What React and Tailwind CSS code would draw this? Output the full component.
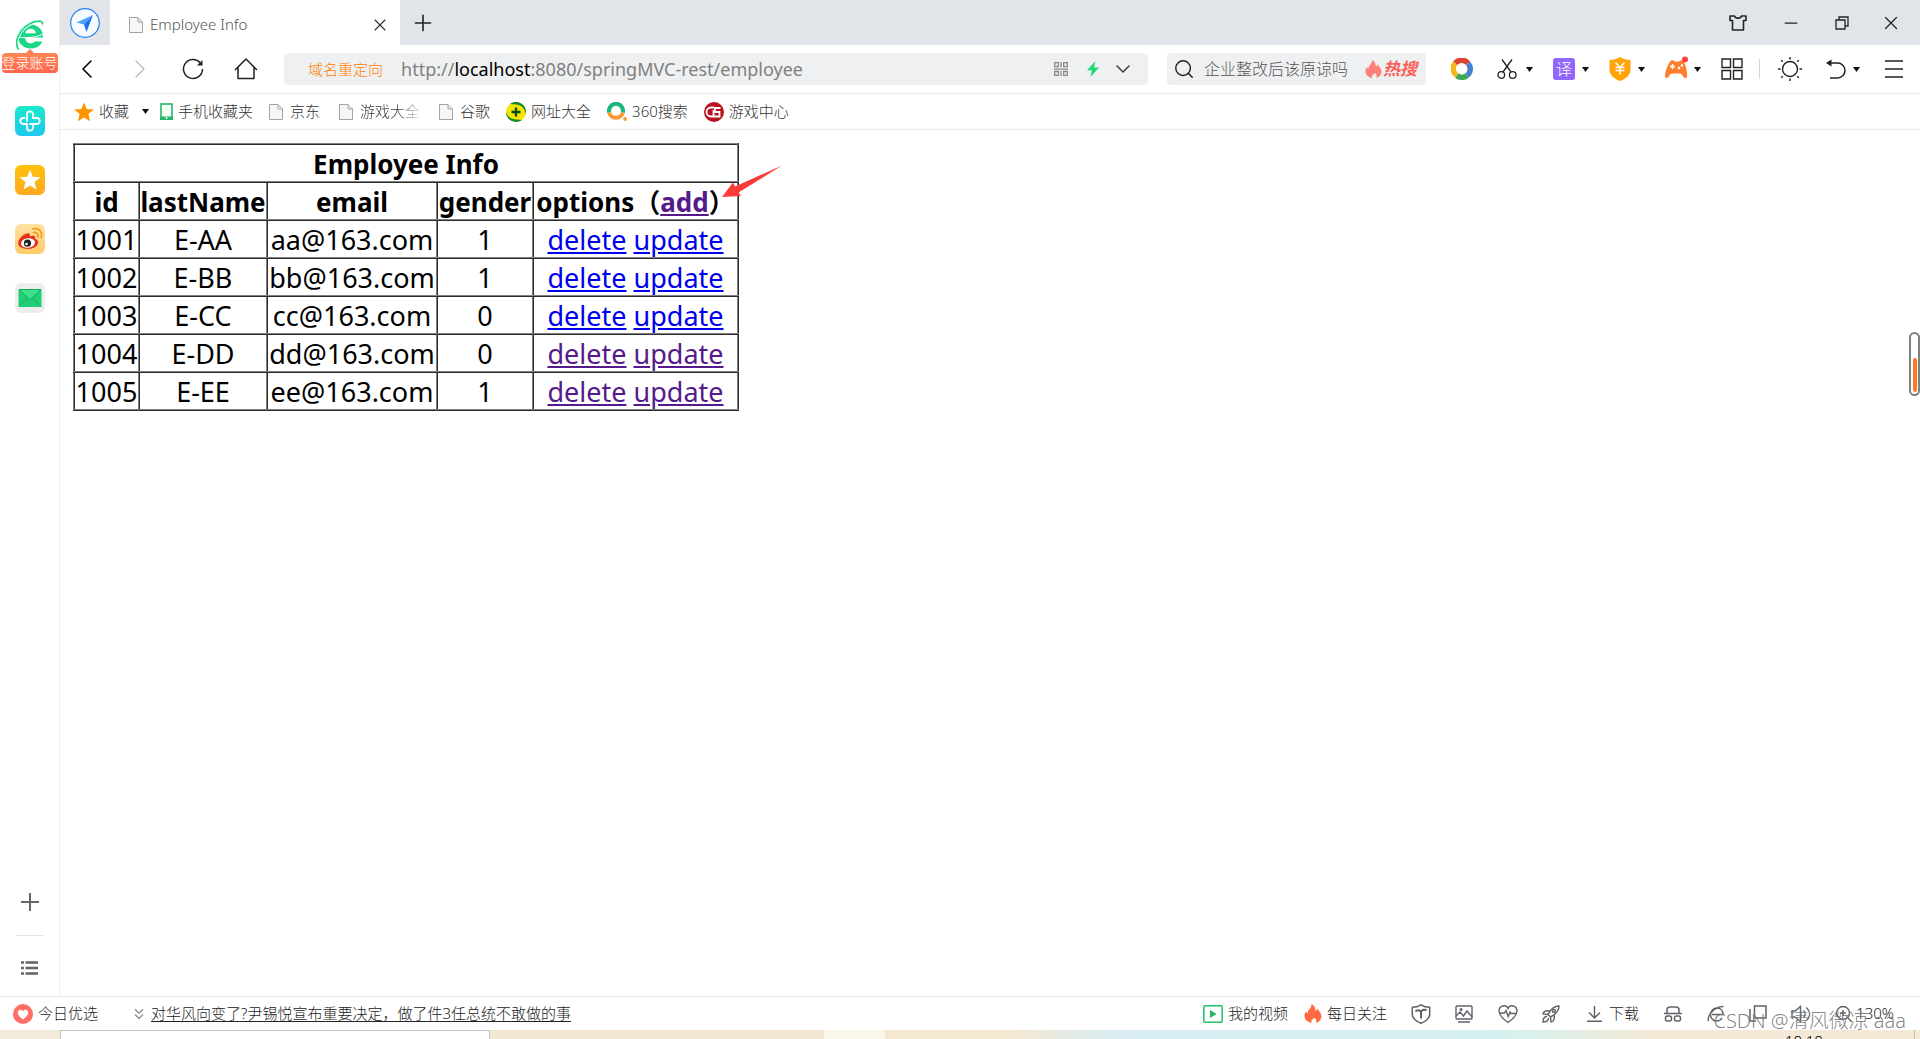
import { useState } from 'react';
import { X, Plus, Minus, ChevronLeft, ChevronRight, ChevronDown, ChevronsDown, Menu, Search } from 'lucide-react';

const employees = [
  { id: 1001, lastName: 'E-AA', email: 'aa@163.com', gender: 1, visited: false },
  { id: 1002, lastName: 'E-BB', email: 'bb@163.com', gender: 1, visited: false },
  { id: 1003, lastName: 'E-CC', email: 'cc@163.com', gender: 0, visited: false },
  { id: 1004, lastName: 'E-DD', email: 'dd@163.com', gender: 0, visited: true },
  { id: 1005, lastName: 'E-EE', email: 'ee@163.com', gender: 1, visited: true },
];

const pageUrl = 'http://localhost:8080/springMVC-rest/employee';

function Caret() {
  return (
    <svg className="w-[7px] h-[5px] shrink-0" viewBox="0 0 7 5">
      <path d="M0 0h7L3.500 5z" fill="#111" />
    </svg>
  );
}

function PageIcon({ className }) {
  return (
    <svg className={className} viewBox="0 0 14 16" fill="#f7f7f7" stroke="#a3a3a3">
      <path d="M.5.5h8.500l4.500 4.500v10.500H.5z" />
      <path d="M9 .5V5h4.500" fill="none" />
    </svg>
  );
}

function BrowserLogo() {
  return (
    <svg className="w-7 h-[30px]" viewBox="0 0 28 30" fill="none">
      <path d="M27 17.500c.4-7.500-5-13-12.500-13S2 10 2 16.500 7.500 28.500 14.500 28.500c5.500 0 9.800-2.500 11.800-7h-7.500c-1 1.300-2.300 1.900-4.100 1.900-3.300 0-5.300-2.200-5.500-5.900z" fill="#18d884" />
      <path d="M9.300 13.300c.5-2.900 2.400-4.500 5.300-4.500s4.900 1.600 5.200 4.500z" fill="#fff" />
      <path d="M2.500 29.500C-1 24 1 17 5 11.500 10 5 17 1.500 23 1.200c2.500-.1 3.800 1 3.500 3.300" stroke="#fff" strokeWidth="3.500" />
      <path d="M2.500 29.500C-1 24 1 17 5 11.500 10 5 17 1.500 23 1.200c2.500-.1 3.800 1 3.500 3.300" stroke="#18d884" strokeWidth="1.700" />
      <path d="M3 17.300C12 18.500 21 17 27.500 14" stroke="#fff" strokeWidth="1" />
    </svg>
  );
}

function Sidebar() {
  return (
    <aside className="w-[60px] shrink-0 border-r border-[#f0f0f0] flex flex-col items-center">
      <button className="mt-5 flex flex-col items-center" aria-label="登录账号">
        <BrowserLogo />
        <span className="w-0 h-0 -mt-[1px] border-x-4 border-x-transparent border-b-4 border-b-[#ff7b52]" />
        <span className="w-14 h-5 rounded-sm bg-gradient-to-b from-[#ff8653] to-[#ff654e] text-white text-[14px] leading-5 text-center whitespace-nowrap">
          登录账号
        </span>
      </button>

      <nav className="mt-[33px] flex flex-col gap-[29px]">
        <button aria-label="健康" className="size-[30px] rounded-md bg-gradient-to-b from-[#1beac9] to-[#20c6ee] flex items-center justify-center">
          <svg className="size-[22px]" viewBox="0 0 22 22" fill="none" stroke="#fff" strokeWidth="1.800">
            <path d="M8 11V4.300a3 3 0 0 1 6 0V8h3.700a3 3 0 0 1 0 6H14v3.700a3 3 0 0 1-6 0V14H4.300a3 3 0 0 1 0-6H5.500M11 14h3" strokeLinecap="round" />
          </svg>
        </button>
        <button aria-label="收藏夹" className="size-[30px] rounded-md bg-gradient-to-b from-[#ffc107] to-[#ffa920] flex items-center justify-center">
          <svg className="size-[22px]" viewBox="0 0 24 24" fill="#fff">
            <path d="M12 .8l3.100 7.700 8.200.5-6.300 5.300 2 8.100L12 18l-7 4.400 2-8.100L.7 9l8.200-.5z" />
          </svg>
        </button>
        <button aria-label="微博" className="size-[30px] rounded-md bg-gradient-to-b from-[#ffe1a0] to-[#ffcb66] flex items-center justify-center">
          <svg className="size-[26px]" viewBox="0 0 26 26" fill="none">
            <path d="M10 7.500c2.500-.6 3.500.8 2.700 2.900 3.400-1.400 6.300-.8 5.300 2.300 4.200 1.500 3.900 5.500.5 8-4 2.800-11 3.100-15 .4-6-4 .8-12.600 6.500-13.600z" fill="#e8321c" />
            <ellipse cx="11" cy="17" rx="7" ry="4.800" fill="#fff" transform="rotate(-8 11 17)" />
            <circle cx="10.500" cy="17.200" r="3.600" fill="#222" />
            <circle cx="9.500" cy="18" r="1.300" fill="#fff" />
            <path d="M16.500 6.500c3-.5 5 1.400 4.400 4.500M16 2.800c6-1.200 9.600 3 8.300 8.500" stroke="#f79a13" strokeWidth="1.700" strokeLinecap="round" />
          </svg>
        </button>
        <button aria-label="邮箱" className="size-[30px] rounded-md bg-[#ededed] flex items-center justify-center">
          <svg className="w-6 h-[18px]" viewBox="0 0 24 18">
            <rect x=".5" width="23" height="18" rx="1" fill="#22cf76" />
            <path d="M.5 17.500L9 9.500M23.500 17.500L15 9.500" stroke="#14ad5d" />
            <path d="M1 .5h22L12 11z" fill="#3ae08a" stroke="#14ad5d" />
          </svg>
        </button>
      </nav>

      <button className="mt-auto" aria-label="添加">
        <svg className="size-[18px]" viewBox="0 0 18 18" stroke="#666" strokeWidth="2">
          <path d="M9 0v18M0 9h18" />
        </svg>
      </button>
      <div className="w-7 h-px bg-[#e2e2e2] mt-6" />
      <button className="mt-6 mb-5" aria-label="列表">
        <svg className="w-[17px] h-4" viewBox="0 0 17 16" stroke="#666" strokeWidth="2.400">
          <path d="M0 2.500h3M4.500 2.500H17M0 8h3M4.500 8H17M0 13.500h3M4.500 13.500H17" />
        </svg>
      </button>
    </aside>
  );
}

function TabBar() {
  return (
    <header className="h-[45px] bg-[#e1e4e9] flex items-center">
      <button className="w-[50px] flex justify-center" aria-label="导航">
        <svg className="size-[30px]" viewBox="0 0 30 30">
          <circle cx="15" cy="15" r="14.300" fill="#f8fbff" stroke="#2680f5" strokeWidth="1.200" />
          <path d="M23 7L6.500 14.500l7.500 2z" fill="#4ba1ff" />
          <path d="M23 7l-9 9.500 2.500 7.500z" fill="#1c6ff0" />
        </svg>
      </button>
      <div className="w-[290px] h-full bg-white flex items-center pl-[19px] pr-[10px]">
        <PageIcon className="w-[14px] h-4 mt-1" />
        <span className="ml-[7px] mt-1 text-[15px] text-[#555] flex-1">Employee Info</span>
        <button aria-label="关闭标签" className="mt-1">
          <X size={20} strokeWidth={1.4} className="text-[#333]" />
        </button>
      </div>
      <button className="ml-[10px]" aria-label="新标签">
        <Plus size={26} strokeWidth={1.5} className="text-[#222]" />
      </button>
      <div className="ml-auto flex items-center pr-[18px] text-[#222]">
        <button aria-label="皮肤" className="mr-[34px]">
          <svg className="w-[18px] h-4" viewBox="0 0 18 16" fill="none" stroke="#222" strokeWidth="1.600">
            <path d="M1 1h4.500c.8 2.800 6.200 2.800 7 0H17v4.500h-2.500V15h-11V5.500H1z" strokeLinejoin="round" />
          </svg>
        </button>
        <button aria-label="最小化" className="mr-[34px]">
          <Minus size={20} strokeWidth={1.5} />
        </button>
        <button aria-label="还原" className="mr-[31px]">
          <svg className="size-[14px]" viewBox="0 0 14 14" fill="none" stroke="#222" strokeWidth="1.300">
            <path d="M1 4h9v9H1zM4 4V1h9v9h-3" />
          </svg>
        </button>
        <button aria-label="关闭">
          <X size={22} strokeWidth={1.3} />
        </button>
      </div>
    </header>
  );
}

function AddressBar() {
  const [editing, setEditing] = useState(false);
  const [url, setUrl] = useState(pageUrl);

  return (
    <div className="flex-1 min-w-0 h-8 ml-3 rounded bg-[#eef0f2] flex items-center pl-6 pr-[13px]">
      <span className="text-[15px] text-[#ff8000] shrink-0">域名重定向</span>
      <div className="relative flex-1 ml-[18px] h-full">
        <input
          id="address"
          className="w-full h-full bg-transparent outline-none text-[18px] text-[#333]"
          value={editing ? url : ''}
          onFocus={() => setEditing(true)}
          onBlur={() => setEditing(false)}
          onChange={(e) => setUrl(e.target.value)}
        />
        {!editing && (
          <label htmlFor="address" className="absolute inset-0 text-[18px] leading-8 text-[#808080] font-normal whitespace-nowrap">
            http://<span className="text-black">localhost</span>:8080/springMVC-rest/employee
          </label>
        )}
      </div>
      <button aria-label="二维码">
        <svg className="size-[14px]" viewBox="0 0 14 14" fill="none" stroke="#888" strokeWidth="1.300">
          <path d="M.7.7h3.600v4H.7zM9.700.7h3.600v4H9.700zM.7 9.500h3.600v4H.7zM9.700 9.500h3.600v4H9.700zM7 0v5.300M7 9v5M0 7.200h14" />
        </svg>
      </button>
      <button aria-label="极速模式" className="ml-[19px]">
        <svg className="w-3 h-4" viewBox="0 0 12 16">
          <path d="M8.500 0L0 9.300h4.800L3.500 16 12 6.500H7z" fill="#20d775" />
        </svg>
      </button>
      <button aria-label="展开" className="ml-3">
        <ChevronDown size={24} strokeWidth={1.6} className="text-[#444]" />
      </button>
    </div>
  );
}

function Flame({ className, fill }) {
  return (
    <svg className={className} viewBox="0 0 18 20">
      <path d="M7.500 0c3 2 4.500 4.500 4 7.500 1-.6 1.600-1.500 1.700-2.800 2.500 2.600 5.300 5.800 4.600 9.300-.5 3-2.800 5.300-5.800 6 1-2 .5-4-1.500-5.500-2 1.500-4 3-3 5.500-4-.8-7.500-3.500-7.500-7.500 0-2 .8-3.300 2-4.500.3 1 .7 1.600 1.500 2C3 6 7.500 5 7.500 0z" fill={fill} />
    </svg>
  );
}

function Toolbar() {
  return (
    <div className="h-[49px] border-b border-[#ebebeb] flex items-center">
      <button className="w-[53px] flex justify-center" aria-label="后退">
        <ChevronLeft size={32} strokeWidth={1.2} className="text-black" />
      </button>
      <button className="w-[53px] flex justify-center" aria-label="前进">
        <ChevronRight size={32} strokeWidth={1} className="text-[#bbb]" />
      </button>
      <button className="w-[53px] flex justify-center" aria-label="刷新">
        <svg className="size-[22px]" viewBox="0 0 22 22" fill="none" stroke="#222" strokeWidth="1.500">
          <path d="M18.200 4.800A9.500 9.500 0 1 0 20.500 11" />
          <path d="M20.500 2v5.500H15z" fill="#222" stroke="none" />
        </svg>
      </button>
      <button className="w-[53px] flex justify-center" aria-label="主页">
        <svg className="w-6 h-[22px]" viewBox="0 0 24 22" fill="none" stroke="#222" strokeWidth="1.500">
          <path d="M1 12L12 1l11 11M4 9.500V20.500h16V9.500" strokeLinejoin="round" />
        </svg>
      </button>

      <AddressBar />

      <div className="w-[259px] h-8 ml-[19px] rounded bg-[#eef0f2] flex items-center pl-[6px] pr-[9px] shrink-0">
        <label htmlFor="search" aria-label="搜索">
          <Search size={22} strokeWidth={1.6} className="text-[#222]" />
        </label>
        <input
          id="search"
          placeholder="企业整改后该原谅吗"
          className="ml-[9px] flex-1 min-w-0 bg-transparent outline-none text-[16px] placeholder:text-[#555]"
        />
        <Flame className="w-[17px] h-[18px]" fill="#ff8078" />
        <span className="ml-px text-[17px] font-bold italic text-[#fb5f5a]">热搜</span>
      </div>

      <div className="flex items-center ml-[25px] pr-[14px] shrink-0">
        <button aria-label="浏览器医生" className="mr-6">
          <svg className="size-[22px]" viewBox="0 0 22 22" fill="none" strokeWidth="5.500">
            <path d="M4.200 5.300A8.200 8.200 0 0 1 17 5.300" stroke="#de4435" />
            <path d="M17 5.300A8.200 8.200 0 0 1 16 17.500" stroke="#4a7fd0" />
            <path d="M16 17.500A8.200 8.200 0 0 1 5.800 17.500" stroke="#3fa653" />
            <path d="M5.800 17.500A8.200 8.200 0 0 1 4.200 5.300" stroke="#f4b81a" />
          </svg>
        </button>
        <button aria-label="截图" className="w-14 flex items-center gap-[7px]">
          <svg className="size-[22px]" viewBox="0 0 22 22" fill="none" stroke="#222" strokeWidth="1.300">
            <circle cx="4.300" cy="17" r="3.300" />
            <circle cx="15.700" cy="17" r="3.300" />
            <path d="M6 14L15 1.500M14 14L5 1.500" />
          </svg>
          <Caret />
        </button>
        <button aria-label="翻译" className="w-14 flex items-center gap-[7px]">
          <span className="size-[22px] rounded-[3px] bg-[#9066fb] text-white text-[16px] leading-[22px] text-center">译</span>
          <Caret />
        </button>
        <button aria-label="网银" className="w-14 flex items-center gap-[7px]">
          <svg className="w-[22px] h-6" viewBox="0 0 22 24">
            <path d="M11 0c3 2 7 3 10.500 3v10c0 5-5 9-10.500 11C5.500 22 .5 18 .5 13V3C4 3 8 2 11 0z" fill="#ffa50a" />
            <path d="M6.500 5.500l4.500 5 4.500-5M6.500 10.500h9M6.500 13.500h9M11 10.500v7" fill="none" stroke="#fff" strokeWidth="1.400" />
          </svg>
          <Caret />
        </button>
        <button aria-label="游戏" className="w-14 flex items-center gap-[7px]">
          <svg className="w-[22px] h-[22px] overflow-visible" viewBox="0 0 22 22">
            <path d="M4.500 4.500c1.500-3 4-2.500 5.500-1 2 .3 3 .3 4.500-.5 2-1.500 4-.5 5 2 1.500 4 3 9.500 2.500 13.500-.5 2-2.500 2-3.500.5-1.200-1.500-2-3.500-3.500-3.500H7c-1.500 0-2.500 2-3.500 3.500-1 1.300-3.300 1.500-3.500-1C0 13.500 2.500 8 4.500 4.500z" fill="#ff7f2e" />
            <path d="M7.500 6v5M5 8.500h5" stroke="#fff" strokeWidth="1.500" />
            <circle cx="14" cy="10" r="1.300" fill="#fff" />
            <circle cx="17" cy="7.500" r="1.300" fill="#fff" />
            <circle cx="20" cy="1.500" r="3" fill="#ff4040" />
          </svg>
          <Caret />
        </button>
        <button aria-label="扩展">
          <svg className="size-[22px]" viewBox="0 0 22 22" fill="none" stroke="#222" strokeWidth="1.400">
            <path d="M1 1h8.500v8.500H1zM12.500 1H21v8.500h-8.500zM1 12.500h8.500V21H1zM12.500 12.500H21V21h-8.500z" />
          </svg>
        </button>
        <div className="w-px h-5 bg-[#d4d4d4] ml-4 mr-[18px]" />
        <button aria-label="夜间模式">
          <svg className="size-6" viewBox="0 0 24 24" fill="none" stroke="#222" strokeWidth="1.400">
            <circle cx="12" cy="12" r="7.500" />
            <path d="M12 0v2.500M12 21.500V24M0 12h2.500M21.500 12H24M3.200 3.200l1.600 1.600M19.200 19.200l1.600 1.600M3.200 20.800l1.600-1.600M19.200 4.800l1.600-1.600" />
          </svg>
        </button>
        <button aria-label="恢复" className="ml-6 flex items-center gap-[7px]">
          <svg className="size-5" viewBox="0 0 20 20" fill="none" stroke="#222" strokeWidth="1.500">
            <path d="M3 4h8.500a7.500 7.500 0 0 1 0 15H4" />
            <path d="M0 4L5.500.5v7z" fill="#222" stroke="none" />
          </svg>
          <Caret />
        </button>
        <button aria-label="菜单" className="ml-[22px]">
          <svg className="size-6" viewBox="0 0 24 24" stroke="#222" strokeWidth="1.500">
            <path d="M3 4h18M3 12h18M3 20h18" />
          </svg>
        </button>
      </div>
    </div>
  );
}

function Bookmark({ icon, className = '', children }) {
  return (
    <a href="#" className={`flex items-center gap-[7px] whitespace-nowrap ${className}`}>
      {icon}
      {children}
    </a>
  );
}

function Bookmarks() {
  return (
    <div className="h-9 border-b border-[#ebebeb] flex items-center pl-[14px] gap-4 text-[15px] text-[#333]">
      <button className="flex items-center mr-[-5px]">
        <svg className="size-5" viewBox="0 0 24 24" fill="#ff9600">
          <path d="M12 .5l3.300 7.900 8.500.6-6.500 5.500 2 8.500L12 18.500 4.700 23l2-8.500L.2 9l8.500-.6z" />
        </svg>
        <span className="ml-[5px] mr-[13px]">收藏</span>
        <Caret />
      </button>
      <Bookmark
        icon={
          <svg className="w-[13px] h-[17px] -mr-[2px]" viewBox="0 0 13 17">
            <rect x="1" y="1" width="11" height="15" fill="#f4fff8" stroke="#27b765" strokeWidth="1.600" />
            <path d="M0 13.500h13V17H0z" fill="#27b765" />
            <circle cx="6.500" cy="15" r="1" fill="#fff" />
          </svg>
        }
      >
        手机收藏夹
      </Bookmark>
      <Bookmark className="mr-[3px]" icon={<PageIcon className="w-[14px] h-4" />}>京东</Bookmark>
      <Bookmark className="mr-[3px]" icon={<PageIcon className="w-[14px] h-4" />}>
        <span className="bg-gradient-to-r from-[#333] from-60% to-[#33333322] bg-clip-text text-transparent">游戏大全</span>
      </Bookmark>
      <Bookmark icon={<PageIcon className="w-[14px] h-4" />}>谷歌</Bookmark>
      <Bookmark
        icon={
          <svg className="size-5 -mr-[2px]" viewBox="0 0 20 20">
            <circle cx="10" cy="10" r="10" fill="#f5e502" />
            <path d="M4 2C9-1.500 16 0 19 5.500c1 2 1.200 4.500.8 6.500-.8-4.500-3.300-8-7.300-9-3-.8-6-.5-8.500-1z" fill="#118a2a" />
            <path d="M16 18c-5 3.500-12 2-15-3.500C.2 13 0 11 .1 9.500.9 14 3.400 16 7.500 17c3 .8 6 .5 8.500 1z" fill="#118a2a" />
            <path d="M10 5.500v9M5.500 10h9" stroke="#064d12" strokeWidth="2.400" />
          </svg>
        }
      >
        网址大全
      </Bookmark>
      <Bookmark
        icon={
          <svg className="size-5 -mr-[2px]" viewBox="0 0 20 20" fill="none" strokeWidth="4">
            <path d="M2.200 10.500A7 7 0 1 1 15.800 10.500" stroke="#17b777" />
            <path d="M2.200 10.500A7 7 0 0 0 15.800 10.500" stroke="#fb9b37" />
            <circle cx="18" cy="17" r="1.900" fill="#fb9b37" />
          </svg>
        }
      >
        360搜索
      </Bookmark>
      <Bookmark
        icon={
          <svg className="size-5 -mr-[2px]" viewBox="0 0 20 20" fill="none" stroke="#fff" strokeWidth="1.800">
            <circle cx="10" cy="10" r="10" fill="#b8131f" stroke="none" />
            <path d="M10 5.500H7A3.500 3.500 0 0 0 7 14.500h2.500M16.500 6H11v4h4.500v4.500H9.500V8" />
          </svg>
        }
      >
        游戏中心
      </Bookmark>
    </div>
  );
}

const cell = 'border-2 border-[#808080] [border-style:inset] p-0 pt-[2px] h-[38px] text-center whitespace-nowrap';

function EmployeeTable() {
  return (
    <table className="table-fixed w-[666px] border-collapse border-2 border-[#808080] [border-style:outset] font-normal leading-[34px] text-black">
      <colgroup>
        <col className="w-[65px]" />
        <col className="w-[128px]" />
        <col className="w-[170px]" />
        <col className="w-24" />
        <col />
      </colgroup>
      <thead className="text-[26px]">
        <tr>
          <th className={cell} colSpan={5}>Employee Info</th>
        </tr>
        <tr>
          <th className={cell}>id</th>
          <th className={cell}>lastName</th>
          <th className={cell}>email</th>
          <th className={cell}>gender</th>
          <th className={cell}>
            options（<a href="#" className="underline text-[#551a8b]">add</a>）
          </th>
        </tr>
      </thead>
      <tbody className="text-[27px]">
        {employees.map((emp) => (
          <tr key={emp.id} className={emp.visited ? '[&_a]:text-[#551a8b]' : '[&_a]:text-[#0000ee]'}>
            <td className={cell}>{emp.id}</td>
            <td className={cell}>{emp.lastName}</td>
            <td className={cell}>{emp.email}</td>
            <td className={cell}>{emp.gender}</td>
            <td className={cell}>
              <a href="#" className="underline">delete</a> <a href="#" className="underline">update</a>
            </td>
          </tr>
        ))}
      </tbody>
    </table>
  );
}

function StatusBar() {
  return (
    <footer className="h-[34px] shrink-0 border-t border-[#e8e8e8] flex items-center pl-[13px] pr-[26px] text-[15px] text-[#222] relative">
      <a href="#" className="flex items-center gap-[5px]">
        <svg className="size-5" viewBox="0 0 20 20">
          <circle cx="10" cy="10" r="10" fill="#ff6f68" />
          <path d="M10 15.500C7 13.200 4.800 11 4.800 8.500c0-3 3.700-4 5.200-1.300 1.500-2.700 5.200-1.700 5.200 1.300 0 2.500-2.200 4.700-5.200 7z" fill="#fff" />
        </svg>
        今日优选
      </a>
      <ChevronsDown size={18} strokeWidth={1.5} className="ml-8 text-[#888]" />
      <a href="#" className="ml-[3px] underline underline-offset-2">对华风向变了?尹锡悦宣布重要决定，做了件3任总统不敢做的事</a>

      <div className="ml-auto flex items-center text-[#5f6368]">
        <a href="#" className="flex items-center gap-[5px] mr-4 text-[#222]">
          <svg className="w-5 h-[18px]" viewBox="0 0 20 18" fill="none">
            <rect x=".8" y=".8" width="18.400" height="16.400" rx="1.500" stroke="#1fc162" strokeWidth="1.500" />
            <path d="M7 5l6.500 4L7 13z" fill="#1fb85c" />
          </svg>
          我的视频
        </a>
        <a href="#" className="flex items-center gap-[5px] text-[#222]">
          <Flame className="w-[18px] h-[19px]" fill="#ff6a45" />
          每日关注
        </a>
        <button aria-label="安全" className="ml-6">
          <svg className="size-5" viewBox="0 0 20 20" fill="none" stroke="currentColor" strokeWidth="1.500">
            <path d="M10 .8c2.500 1.700 5.500 2.500 8.700 2.500v7c0 4-4.500 7.500-8.700 9-4.200-1.500-8.700-5-8.700-9v-7C4.500 3.300 7.500 2.500 10 .8z" />
            <path d="M10 14.500V7M4.500 7.500C6 5.500 9 6 10 8c1-2.500 4-3 5.500-1.500" strokeWidth="2" />
          </svg>
        </button>
        <button aria-label="壁纸" className="ml-6">
          <svg className="size-[18px]" viewBox="0 0 18 18" fill="none" stroke="currentColor" strokeWidth="1.400">
            <rect x="1" y="1" width="16" height="13" rx="1" />
            <path d="M1 11l4-4 3.500 4L12 6l5 6M3 17h12" />
            <circle cx="6" cy="4.500" r=".8" />
          </svg>
        </button>
        <button aria-label="健康助手" className="ml-[25px]">
          <svg className="size-5" viewBox="0 0 20 20" fill="none" stroke="currentColor" strokeWidth="1.400">
            <path d="M10 18.500C5 15 1 11.500 1 7c0-5.500 7-7 9-2.500C12 0 19 1.500 19 7c0 4.500-4 8-9 11.500z" />
            <path d="M2 9h4.500L8 6.500l2.200 6L12 8l1 1.500h5" />
          </svg>
        </button>
        <button aria-label="加速" className="ml-6">
          <svg className="size-[18px]" viewBox="0 0 18 18" fill="none" stroke="currentColor" strokeWidth="1.400">
            <path d="M17 1c-4 0-8 2.500-11 8.500L8.500 12C14.500 9 17 5 17 1zM8 6C4 5 1.500 6.500 1 9l5 .5M12 10c1 4-.5 6.500-3 7L8.500 12M5 11.500c-3 0-4 3-4 5.500 2.500 0 5.500-1 5.500-4" />
            <circle cx="12" cy="6" r="1.500" />
          </svg>
        </button>
        <button className="ml-[27px] flex items-center gap-[7px] text-[#222]">
          <svg className="w-[15px] h-4" viewBox="0 0 15 16" fill="none" stroke="#5f6368" strokeWidth="1.500">
            <path d="M7.500 0v12M2 6.500L7.500 12 13 6.500M0 15.200h15" />
          </svg>
          下载
        </button>
        <button aria-label="无痕" className="ml-[25px]">
          <svg className="w-[18px] h-4" viewBox="0 0 18 16" fill="none" stroke="currentColor" strokeWidth="1.500">
            <path d="M0 7.500h18M3 7.500V4c0-2 1-3 3-3h6c2 0 3 1 3 3v3.500" />
            <rect x="1.500" y="10" width="6" height="5" rx="2" />
            <rect x="10.500" y="10" width="6" height="5" rx="2" />
          </svg>
        </button>
        <button aria-label="内核" className="ml-[25px]">
          <svg className="size-[18px]" viewBox="0 0 18 18" fill="none" stroke="currentColor" strokeWidth="1.400">
            <path d="M5 9.500h11c0-4-2.500-6.500-6-6.500S3.500 6 3.500 9.500 6 16 9.500 16c2.500 0 4.500-1 5.500-3M1.500 16C0 12 6 1.500 16.500 1.500" />
          </svg>
        </button>
        <button aria-label="分屏" className="ml-6">
          <svg className="w-[18px] h-[17px]" viewBox="0 0 18 17" fill="none" stroke="currentColor" strokeWidth="1.500">
            <path d="M5.500 1H17v12H5.500zM1 4v12h6" />
          </svg>
        </button>
        <button aria-label="声音" className="ml-6">
          <svg className="w-5 h-[18px]" viewBox="0 0 20 18" fill="none" stroke="currentColor" strokeWidth="1.400">
            <path d="M1 6h3l5.500-4.500v15L4 12H1zM12.500 5.500c2 2 2 5 0 7M15.500 2.500c4 4 4 9 0 13" />
          </svg>
        </button>
        <button className="ml-6 flex items-center gap-[3px] text-[#222]">
          <svg className="size-[18px]" viewBox="0 0 18 18" fill="none" stroke="#5f6368" strokeWidth="1.400">
            <circle cx="8" cy="8" r="6.500" />
            <path d="M8 5v6M5 8h6M13 13l4 4" />
          </svg>
          130%
        </button>
      </div>

      <span className="absolute right-[14px] -bottom-[3px] text-[20px] leading-6 text-[#777]/90 whitespace-nowrap">
        CSDN @清风微凉 aaa
      </span>
    </footer>
  );
}

function Taskbar() {
  return (
    <div className="h-[9px] shrink-0 overflow-hidden flex">
      <div className="w-[60px] bg-[#f2ebda]" />
      <div className="w-[430px] bg-white border border-b-0 border-[#c4c4c4]" />
      <div className="w-[334px] bg-[#f3e7d4]" />
      <div className="w-[61px] bg-[#fbf6ea]" />
      <div className="flex-1 bg-[linear-gradient(90deg,#f5e8d0_12%,#d8ecf2_22%,#d5f1ef_60%,#f4e9d6_74%)]">
        <div className="h-full ml-auto mr-[5px] w-[130px] border-r border-[#c9bfae] pt-1 text-[15px] leading-[15px] text-black">
          18:18
        </div>
      </div>
    </div>
  );
}

export default function App() {
  return (
    <div className="h-screen flex flex-col overflow-hidden bg-white font-light font-['Noto_Sans','Noto_Sans_CJK_SC',sans-serif]">
      <div className="flex-1 min-h-0 flex">
        <Sidebar />
        <div className="flex-1 min-w-0 flex flex-col">
          <TabBar />
          <Toolbar />
          <Bookmarks />
          <main className="relative flex-1 pt-[13px] pl-[13px]">
            <div className="relative w-fit">
              <EmployeeTable />
              {/* Arrow pointing at the add link */}
              <svg className="absolute left-[649px] top-[22px] w-[61px] h-8" viewBox="0 0 61 32">
                <path d="M0 32L11 17.500l2 4L60 .5 16.500 27.500l2.500 3.500z" fill="#fb3b38" />
              </svg>
            </div>
            <div className="absolute right-0 top-[202px] w-[11px] h-16 rounded-full border-2 border-[#808080] flex items-end justify-center pb-[2px]">
              <div className="w-[4px] h-[34px] rounded-full bg-[#ff7a26]" />
            </div>
          </main>
        </div>
      </div>
      <StatusBar />
      <Taskbar />
    </div>
  );
}
